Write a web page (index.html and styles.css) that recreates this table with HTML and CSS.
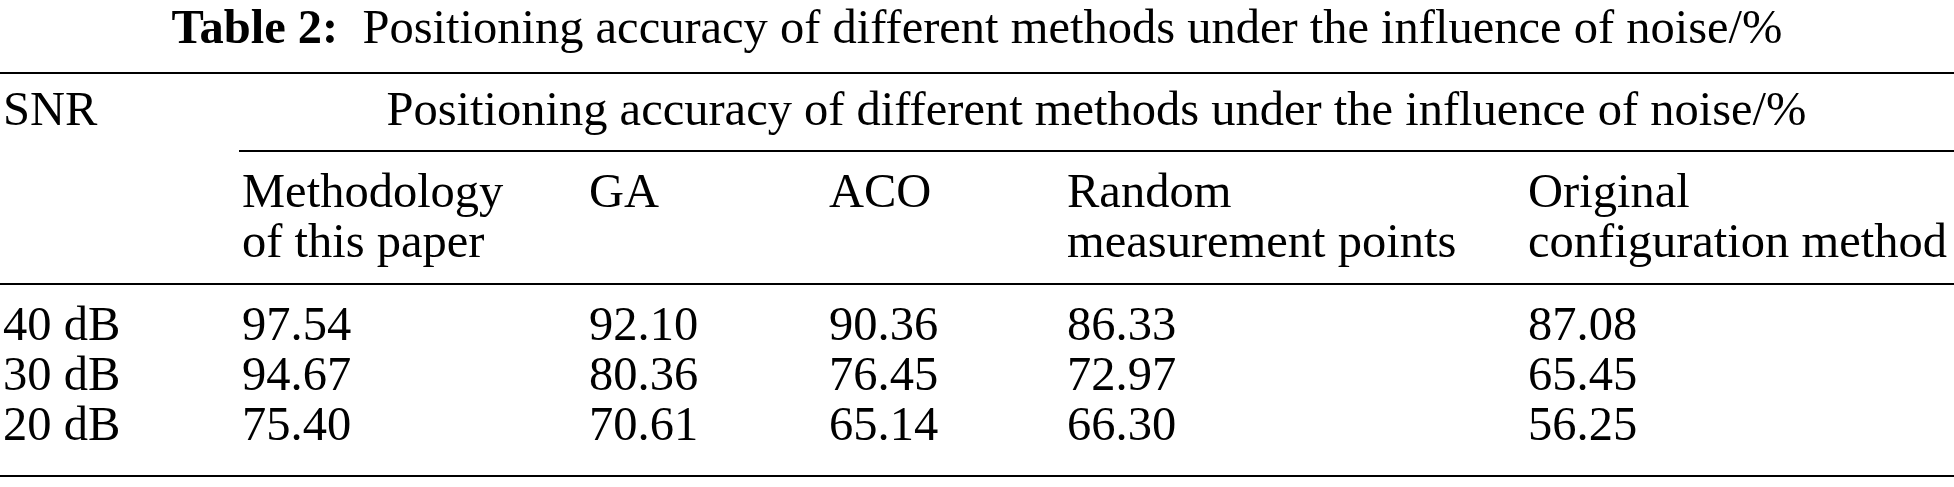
FILE: index.html
```html
<!DOCTYPE html>
<html lang="en">
<head>
    <meta charset="UTF-8">
    <title>Table 2</title>
    <link rel="stylesheet" href="styles.css">
</head>
<body>
    <div class="caption">
        <b>Table 2:</b>&nbsp; Positioning accuracy of different methods under the influence of noise/%
    </div>

    <table class="results">
        <colgroup>
            <col class="c-snr">
            <col class="c-ours">
            <col class="c-ga">
            <col class="c-aco">
            <col class="c-random">
            <col class="c-original">
        </colgroup>
        <thead>
            <tr class="head-top">
                <th class="snr" rowspan="2">SNR</th>
                <th class="group" colspan="5">Positioning accuracy of different methods under the influence of noise/%</th>
            </tr>
            <tr class="head-methods">
                <th>Methodology<br>of this paper</th>
                <th>GA</th>
                <th>ACO</th>
                <th>Random<br>measurement points</th>
                <th>Original<br>configuration method</th>
            </tr>
        </thead>
        <tbody>
            <tr class="first">
                <td>40 dB</td>
                <td>97.54</td>
                <td>92.10</td>
                <td>90.36</td>
                <td>86.33</td>
                <td>87.08</td>
            </tr>
            <tr>
                <td>30 dB</td>
                <td>94.67</td>
                <td>80.36</td>
                <td>76.45</td>
                <td>72.97</td>
                <td>65.45</td>
            </tr>
            <tr class="last">
                <td>20 dB</td>
                <td>75.40</td>
                <td>70.61</td>
                <td>65.14</td>
                <td>66.30</td>
                <td>56.25</td>
            </tr>
        </tbody>
    </table>
</body>
</html>
```

FILE: styles.css
```css
body {
    margin: 0;
    padding: 0;
    background: #fff;
    color: #000;
    font-family: "Liberation Serif", "Times New Roman", serif;
    font-size: 48.5px;
}

/* Titulo da tabela */
.caption {
    text-align: center;
    line-height: 54px;
    height: 54px;
    margin-bottom: 18px;
    white-space: nowrap;
}

.caption b {
    font-weight: bold;
}

/* Tabela */
.results {
    width: 100%;
    table-layout: fixed;
    border-collapse: separate;
    border-spacing: 0;
}

.c-snr { width: 239px; }
.c-ours { width: 347px; }
.c-ga { width: 240px; }
.c-aco { width: 238px; }
.c-random { width: 461px; }
.c-original { width: 429px; }

.results th,
.results td {
    font-weight: normal;
    text-align: left;
    vertical-align: top;
    line-height: 50px;
    padding: 0 0 0 3px;
    white-space: nowrap;
}

.head-top th {
    border-top: 2px solid #000;
    padding-top: 10px;
    padding-bottom: 16px;
}

.results th.snr {
    padding-left: 3px;
    border-bottom: 2px solid #000;
}

.results th.group {
    text-align: center;
    padding-left: 0;
    border-bottom: 2px solid #000;
}

.head-methods th {
    padding-top: 14px;
    padding-bottom: 17px;
    border-bottom: 2px solid #000;
}

.results tr.first td {
    padding-top: 14px;
}

.results tr.last td {
    padding-bottom: 26px;
    border-bottom: 2px solid #000;
}
```
